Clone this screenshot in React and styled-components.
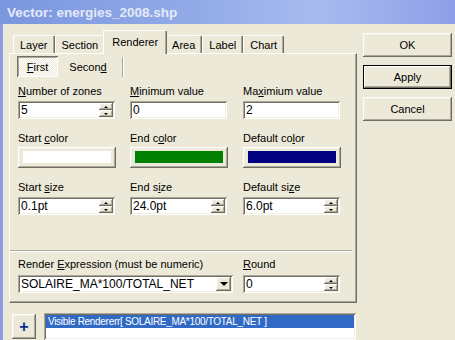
import styled, { createGlobalStyle } from "styled-components";

const GlobalStyle = createGlobalStyle`
  html, body { margin: 0; padding: 0; background: #ece9d8; }
  body { width: 455px; height: 340px; overflow: hidden; font-family: "Liberation Sans", Arial, sans-serif; font-size: 11px; color: #000; }
`;

const raised = `
  box-shadow: inset -1px -1px #716f64, inset 1px 1px #fff, inset -2px -2px #aca899, inset 2px 2px #f1efe2;
`;
const sunken = `
  box-shadow: inset 1px 1px #aca899, inset -1px -1px #fff, inset 2px 2px #716f64, inset -2px -2px #f1efe2;
`;

const Window = styled.div`
  display: flex;
  flex-direction: column;
  width: 455px;
  height: 340px;
  background: #ece9d8;
`;

const TitleBar = styled.div`
  height: 24px;
  flex: none;
  display: flex;
  align-items: center;
  padding-left: 7px;
  background: linear-gradient(to right, #7a96df 0%, #93ace8 45%, #a7bbef 70%, #8f9ee8 100%);
  color: #e3eaf8;
  font-weight: bold;
  font-size: 13.5px;
`;

const Body = styled.div`
  flex: 1;
  display: flex;
  border-left: 3px solid #8a9ce4;
  min-height: 0;
`;

const Main = styled.div`
  width: 354px;
  flex: none;
  padding-top: 9px;
  display: flex;
  flex-direction: column;
`;

const TabStrip = styled.div`
  display: flex;
  align-items: flex-end;
  height: 20px;
  margin-left: 10px;
`;

const Tab = styled.div`
  position: relative;
  display: flex;
  align-items: center;
  height: ${(p) => (p.$active ? "21px" : "17px")};
  margin: ${(p) => (p.$active ? "0 -2px -1px" : "0")};
  padding: 0 ${(p) => (p.$active ? "8px" : "6px")};
  background: #ece9d8;
  border-top: 1px solid #fff;
  border-left: 1px solid #fff;
  border-right: 1px solid #716f64;
  box-shadow: inset -1px 0 #aca899;
  border-radius: 2px 2px 0 0;
  z-index: ${(p) => (p.$active ? 1 : 0)};
  padding-bottom: ${(p) => (p.$active ? "2px" : "0")};
`;

const Panel = styled.div`
  margin-left: 6px;
  width: 348px;
  height: 250px;
  box-sizing: border-box;
  border-top: 1px solid #fff;
  border-left: 1px solid #fff;
  border-right: 1px solid #716f64;
  border-bottom: 1px solid #716f64;
  box-shadow: inset -1px -1px #aca899;
  padding: 2px 0 0 7px;
  display: flex;
  flex-direction: column;
`;

const SubBar = styled.div`
  display: flex;
  align-items: center;
  height: 21px;
`;

const SubButton = styled.div`
  display: flex;
  align-items: center;
  justify-content: center;
  box-sizing: border-box;
  height: 21px;
  width: ${(p) => p.$w}px;
  ${(p) =>
    p.$pressed
      ? `
    background: repeating-conic-gradient(#ffffff 0 25%, #ece9d8 0 50%) 0 0 / 2px 2px;
    box-shadow: inset 1px 1px #716f64, inset -1px -1px #fff, inset 2px 2px #aca899;
  `
      : ""}
`;

const SubSep = styled.div`
  width: 1px;
  height: 20px;
  margin-left: 4px;
  background: #aca899;
  border-right: 1px solid #fff;
`;

const Grid = styled.div`
  display: grid;
  grid-template-columns: 98px 99px 98px;
  column-gap: 14px;
  row-gap: 12px;
  margin: 7px 0 0 1px;
`;

const Field = styled.div`
  display: flex;
  flex-direction: column;
`;

const Label = styled.div`
  height: 14px;
  line-height: 14px;
  margin-bottom: ${(p) => p.$gap ?? 3}px;
  white-space: nowrap;
`;

const Input = styled.div`
  position: relative;
  box-sizing: border-box;
  height: 18px;
  width: ${(p) => (p.$w ? `${p.$w}px` : "97px")};
  background: #fff;
  ${sunken}
  display: flex;
  align-items: center;
  padding-left: 3px;
  font-size: 12px;
`;

const Spin = styled.div`
  position: absolute;
  right: 2px;
  top: 2px;
  bottom: 2px;
  width: 14px;
  display: flex;
  flex-direction: column;
`;

const SpinBtn = styled.div`
  flex: 1;
  background: #ece9d8;
  ${raised}
  display: flex;
  align-items: center;
  justify-content: center;
  &::after {
    content: "";
    border-left: 2px solid transparent;
    border-right: 2px solid transparent;
    ${(p) => (p.$down ? "border-top: 2px solid #000;" : "border-bottom: 2px solid #000;")}
  }
`;

const ColorButton = styled.div`
  box-sizing: border-box;
  height: 21px;
  width: 98px;
  background: #ece9d8;
  ${raised}
  padding: 4px 5px 5px;
  display: flex;
`;

const Swatch = styled.div`
  flex: 1;
  background: ${(p) => p.$color};
`;

const Separator = styled.div`
  margin: 35px 4px 0 -7px;
  height: 1px;
  background: #aca899;
  border-bottom: 1px solid #fff;
`;

const ExprRow = styled.div`
  display: flex;
  gap: 10px;
  margin: 5px 0 0 1px;
`;

const Combo = styled(Input)`
  width: 215px;
  padding-right: 18px;
`;

const DropBtn = styled.div`
  position: absolute;
  right: 2px;
  top: 2px;
  bottom: 2px;
  width: 15px;
  background: #ece9d8;
  ${raised}
  display: flex;
  align-items: center;
  justify-content: center;
  &::after {
    content: "";
    border-left: 4px solid transparent;
    border-right: 4px solid transparent;
    border-top: 4px solid #000;
  }
`;

const BottomRow = styled.div`
  display: flex;
  margin-top: 10px;
  padding-left: 9px;
  gap: 8px;
  flex: 1;
`;

const PlusButton = styled.div`
  box-sizing: border-box;
  width: 24px;
  height: 25px;
  margin-top: 1px;
  background: #ece9d8;
  ${raised}
  display: flex;
  align-items: center;
  justify-content: center;
  color: #0a2a9a;
  font-weight: bold;
  font-size: 16px;
`;

const ListBox = styled.div`
  flex: 1;
  margin-right: 1px;
  background: #fff;
  ${sunken}
  padding: 2px 2px 0;
`;

const ListItem = styled.div`
  height: 13px;
  line-height: 13px;
  padding-left: 2px;
  background: ${(p) => (p.$selected ? "#316ac5" : "transparent")};
  color: ${(p) => (p.$selected ? "#fff" : "#000")};
  font-size: 10px;
  letter-spacing: -0.3px;
  white-space: nowrap;
  overflow: hidden;
`;

const Side = styled.div`
  display: flex;
  flex-direction: column;
  gap: 8px;
  padding: 9px 0 0 6px;
`;

const Button = styled.div`
  box-sizing: border-box;
  width: 89px;
  height: 24px;
  display: flex;
  align-items: center;
  justify-content: center;
  background: #ece9d8;
  ${raised}
  ${(p) => (p.$default ? "outline: 1px solid #000; outline-offset: -1px; box-shadow: inset -2px -2px #716f64, inset 2px 2px #fff, inset -3px -3px #aca899;" : "")}
`;

const SpinInput = ({ value, w }) => (
  <Input $w={w}>
    {value}
    <Spin>
      <SpinBtn />
      <SpinBtn $down />
    </Spin>
  </Input>
);

const tabs = ["Layer", "Section", "Renderer", "Area", "Label", "Chart"];

export default function App() {
  return (
    <>
      <GlobalStyle />
      <Window>
        <TitleBar>Vector: energies_2008.shp</TitleBar>
        <Body>
          <Main>
            <TabStrip>
              {tabs.map((t) => (
                <Tab key={t} $active={t === "Renderer"}>
                  {t}
                </Tab>
              ))}
            </TabStrip>
            <Panel>
              <SubBar>
                <SubButton $w={41} $pressed>
                  <u>F</u>irst
                </SubButton>
                <SubButton $w={60}>
                  Secon<u>d</u>
                </SubButton>
                <SubSep />
              </SubBar>
              <Grid>
                <Field>
                  <Label><u>N</u>umber of zones</Label>
                  <SpinInput value="5" />
                </Field>
                <Field>
                  <Label><u>M</u>inimum value</Label>
                  <Input>0</Input>
                </Field>
                <Field>
                  <Label>Ma<u>x</u>imium value</Label>
                  <Input>2</Input>
                </Field>
                <Field>
                  <Label $gap={2}>Start <u>c</u>olor</Label>
                  <ColorButton><Swatch $color="#ffffff" /></ColorButton>
                </Field>
                <Field>
                  <Label $gap={2}>End c<u>o</u>lor</Label>
                  <ColorButton><Swatch $color="#008000" /></ColorButton>
                </Field>
                <Field>
                  <Label $gap={2}>Default co<u>l</u>or</Label>
                  <ColorButton><Swatch $color="#000080" /></ColorButton>
                </Field>
                <Field>
                  <Label>Start <u>s</u>ize</Label>
                  <SpinInput value="0.1pt" />
                </Field>
                <Field>
                  <Label>End s<u>i</u>ze</Label>
                  <SpinInput value="24.0pt" />
                </Field>
                <Field>
                  <Label>Default si<u>z</u>e</Label>
                  <SpinInput value="6.0pt" />
                </Field>
              </Grid>
              <Separator />
              <ExprRow>
                <Field>
                  <Label $gap={4}>Render <u>E</u>xpression (must be numeric)</Label>
                  <Combo>
                    SOLAIRE_MA*100/TOTAL_NET
                    <DropBtn />
                  </Combo>
                </Field>
                <Field>
                  <Label $gap={4}><u>R</u>ound</Label>
                  <SpinInput value="0" />
                </Field>
              </ExprRow>
            </Panel>
            <BottomRow>
              <PlusButton>+</PlusButton>
              <ListBox>
                <ListItem $selected>Visible Rendererr[ SOLAIRE_MA*100/TOTAL_NET ]</ListItem>
              </ListBox>
            </BottomRow>
          </Main>
          <Side>
            <Button>OK</Button>
            <Button $default>Apply</Button>
            <Button>Cancel</Button>
          </Side>
        </Body>
      </Window>
    </>
  );
}
